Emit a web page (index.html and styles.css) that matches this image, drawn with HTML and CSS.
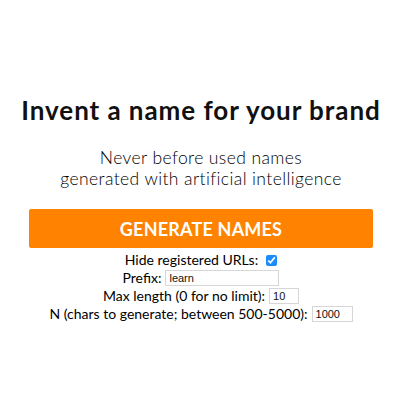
FILE: index.html
```html
<!DOCTYPE html>
<html>
<head>
<meta charset="utf-8">
<link rel="stylesheet" href="styles.css">
</head>
<body>
<main class="page">
  <h1 class="title">Invent a name for your brand</h1>
  <p class="subtitle">Never before used names<br>generated with artificial intelligence</p>
  <button class="generate">GENERATE NAMES</button>
  <form class="options">
    <div class="row"><label>Hide registered URLs:</label><input class="check" type="checkbox" checked></div>
    <div class="row"><label>Prefix:</label><input class="field field-prefix" type="text" value="learn"></div>
    <div class="row"><label>Max length (0 for no limit):</label><input class="field field-max" type="text" value="10"></div>
    <div class="row"><label>N (chars to generate; between 500-5000):</label><input class="field field-n" type="text" value="1000"></div>
  </form>
</main>
</body>
</html>
```
FILE: styles.css
```css
html, body {
  margin: 0;
  padding: 0;
  background: #fff;
}
body {
  font-family: Lato, "Open Sans", sans-serif;
  color: #111;
}
.page {
  width: 344px;
  margin: 0 auto;
  padding: 93px 0 0 2px;
  display: flex;
  flex-direction: column;
  align-items: center;
}
.title {
  margin: 0;
  font-size: 26px;
  font-weight: 700;
  letter-spacing: 0.95px;
  line-height: 34px;
  white-space: nowrap;
  color: #111;
}
.subtitle {
  margin: 20px 0 0;
  font-size: 17.5px;
  font-weight: 300;
  letter-spacing: 0.4px;
  line-height: 21px;
  text-align: center;
  color: #000;
}
.generate {
  margin-top: 20px;
  width: 344px;
  height: 39px;
  border: none;
  border-radius: 2px;
  background: #ff8300;
  color: #fff;
  font-family: Lato, sans-serif;
  font-weight: 700;
  font-size: 18px;
  letter-spacing: 0.2px;
  padding: 0;
}
.options {
  margin-top: 3px;
  display: flex;
  flex-direction: column;
  align-items: center;
}
.row {
  display: flex;
  align-items: center;
  justify-content: center;
  height: 18px;
  font-size: 14px;
  line-height: 18px;
  color: #000;
  white-space: nowrap;
}
.row label {
  margin-right: 4px;
}
.check {
  margin: 0 0 0 4px;
  width: 11px;
  height: 11px;
  accent-color: #1a8cff;
}
.field {
  box-sizing: border-box;
  height: 16px;
  margin: 0;
  padding: 0 3px;
  border: 1px solid #d6d6d6;
  font-family: "Liberation Sans", Arial, sans-serif;
  font-size: 11px;
  color: #111;
}
.field-prefix { width: 114px; }
.field-max { width: 30px; }
.field-n { width: 41px; }
```
